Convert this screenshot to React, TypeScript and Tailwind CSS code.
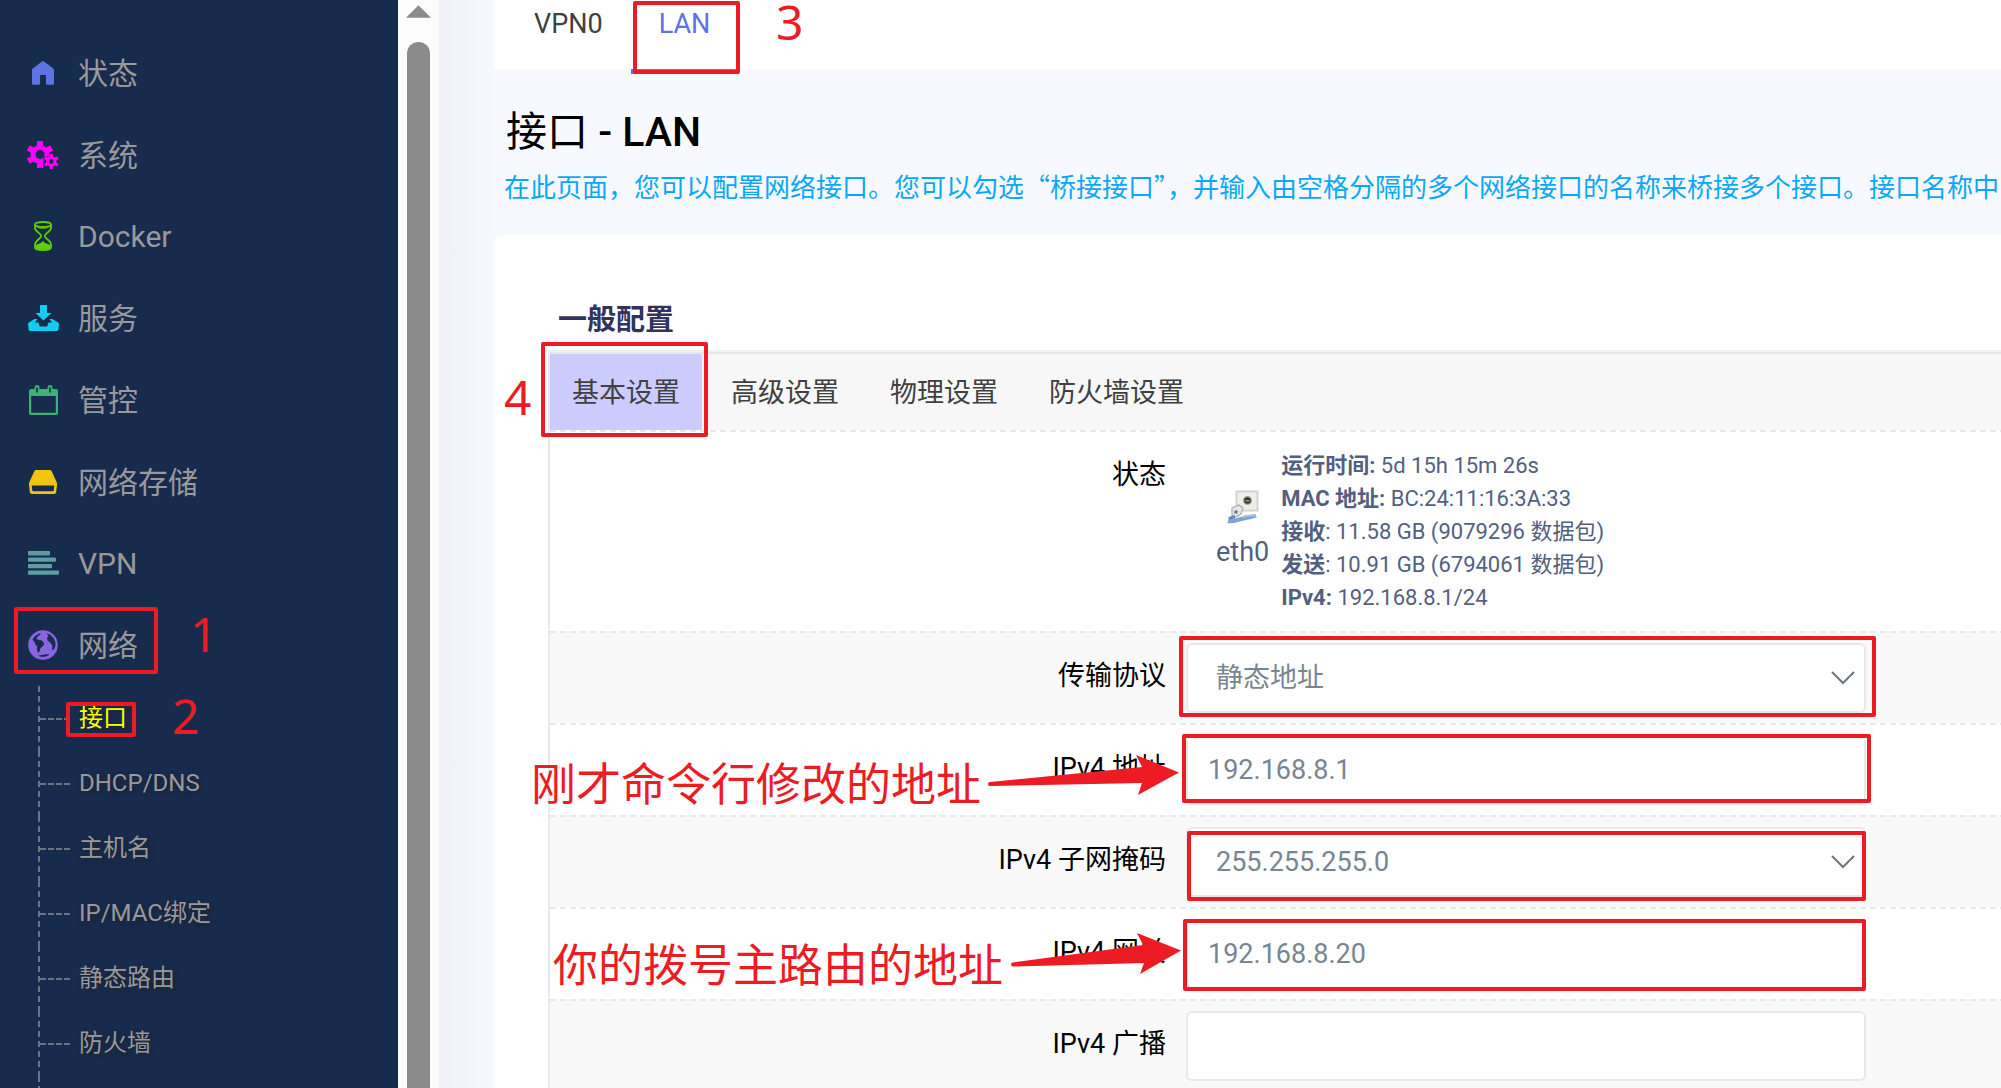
import type { ReactNode } from "react";

const DASH_X_LIGHT =
  "bg-[repeating-linear-gradient(90deg,#e4e9ea_0px,#e4e9ea_6px,transparent_6px,transparent_10px)]";
const DASH_X_NAV =
  "bg-[repeating-linear-gradient(90deg,#6b7480_0px,#6b7480_6px,transparent_6px,transparent_8px)]";
const DASH_Y_NAV =
  "bg-[repeating-linear-gradient(180deg,#6b7480_0px,#6b7480_6px,transparent_6px,transparent_10px)]";

function HomeIcon() {
  return (
    <svg width="22" height="24" viewBox="0 0 22 24" fill="#5e72e4" aria-hidden="true">
      <path d="M10 .6a1.6 1.6 0 0 1 2 0L21 7.2a2 2 0 0 1 1 1.7V22.5a1.3 1.3 0 0 1-1.3 1.3H15a1 1 0 0 1-1-1V14H8v8.8a1 1 0 0 1-1 1H1.300A1.300 1.300 0 0 1 0 22.500V8.900A2 2 0 0 1 1 7.200Z" />
    </svg>
  );
}

function Gear({ cx, cy, r, sw, reach, tooth }: { cx: number; cy: number; r: number; sw: number; reach: number; tooth: number }) {
  return (
    <g stroke="#f0f" fill="none" transform={`translate(${cx} ${cy})`}>
      <circle r={r} strokeWidth={sw} />
      {[0, 60, 120, 180, 240, 300].map((a) => (
        <line key={a} x1="0" y1={-r} x2="0" y2={-reach} strokeWidth={tooth} transform={`rotate(${a})`} />
      ))}
    </g>
  );
}

function CogsIcon() {
  return (
    <svg width="32" height="28" viewBox="0 0 32 28" aria-hidden="true">
      <Gear cx={13} cy={13.5} r={7} sw={5} reach={13.4} tooth={6} />
      <path d="M16.500 28V15.500h15V28z" fill="#172b4d" />
      <Gear cx={24.3} cy={20.4} r={3.8} sw={3} reach={7.6} tooth={3} />
    </svg>
  );
}

function HourglassIcon() {
  return (
    <svg width="18" height="30" viewBox="0 0 18 30" fill="none" stroke="#5fcf00" strokeWidth="1.800" aria-hidden="true">
      <ellipse cx="9" cy="3.500" rx="8" ry="2.500" />
      <path d="M1 3.500v3.200C1 11 7.200 12 7.200 15S1 19 1 24v2.500C1 28 4.500 29.100 9 29.100s8-1.100 8-2.600V24c0-5-6.200-6-6.200-9S17 11 17 6.700V3.500" />
      <path d="M3.500 6.500c3 1 8 1 11 0" strokeWidth="1" />
      <path d="M9 19.500c.6 3 6.500 3.500 7 4.500v3.500c-3 1.800-11 1.800-14 0V24c.5-1 6.400-1.500 7-4.500z" fill="#5fcf00" stroke="none" />
    </svg>
  );
}

function DownloadIcon() {
  return (
    <svg width="31" height="26" viewBox="0 0 31 26" fill="#11cdef" aria-hidden="true">
      <path d="M12 0h7v8h4.500L15.500 15.500 7.500 8H12z" />
      <path d="M6.500 14 9.500 14 7 17.500h3.500L11.800 21.500h7.400l1.300-4H24L21.500 14h3l5.600 3.500c.6.5.9 1 .9 1.800L30.400 24.600a1.500 1.500 0 0 1-1.500 1.400H2.100A1.500 1.500 0 0 1 .6 24.600L0 19.300c0-.8.3-1.300.9-1.800z" />
    </svg>
  );
}

function CalendarIcon() {
  return (
    <svg width="29" height="30" viewBox="0 0 29 30" aria-hidden="true">
      <path
        fillRule="evenodd"
        fill="#3cb371"
        d="M2 4h3.500V2.500a2.500 2.500 0 0 1 5 0V4h8V2.500a2.500 2.500 0 0 1 5 0V4H27a2 2 0 0 1 2 2v22a2 2 0 0 1-2 2H2a2 2 0 0 1-2-2V6a2 2 0 0 1 2-2zM2.200 11v16.800h24.600V11zM7.200 2.500v5h1.600v-5zM20.200 2.500v5h1.600v-5z"
      />
    </svg>
  );
}

function DriveIcon() {
  return (
    <svg width="28" height="24" viewBox="0 0 28 24" aria-hidden="true">
      <path
        fillRule="evenodd"
        fill="#f1c40f"
        d="M7.500 0h13c1 0 1.800.4 2.200 1.300L27.600 12c.4 1 .5 2 .4 3l-.8 7c-.2 1.300-1 2-2.200 2H3c-1.200 0-2-.7-2.200-2L0 15c-.1-1 0-2 .4-3L5.300 1.300C5.700.4 6.500 0 7.500 0zM3.500 15.500c-.5 0-.8.3-.7.8l.5 4.200c.1.500.4.800 1 .800h19.400c.6 0 .9-.3 1-.8l.5-4.200c.1-.5-.2-.8-.7-.8z"
      />
    </svg>
  );
}

function LinesIcon() {
  return (
    <svg width="31" height="24" viewBox="0 0 31 24" fill="#5f9ea0" aria-hidden="true">
      <rect y="0" width="22" height="4.400" rx="1" />
      <rect y="6.400" width="28" height="4.400" rx="1" />
      <rect y="12.900" width="24" height="4.400" rx="1" />
      <rect y="19.400" width="31" height="4.400" rx="1" />
    </svg>
  );
}

function GlobeIcon() {
  return (
    <svg width="30" height="30" viewBox="0 0 30 30" aria-hidden="true">
      <circle cx="15" cy="15" r="14.800" fill="#8965e0" />
      <g fill="#172b4d">
        <path d="M4.500 9.500 7 6l3.500-2.300 2.500-.4-1 1.500-2.500 1.700-1 2.500 2.500 1 3 .5 1 1.500 1.200 1.200-.7 2.300-1.800 1.500-1.200 1.200-.7 2.500L10.500 23 9 20.500l.3-4-1.800-2-1-2.500z" />
        <path d="M18.500 3.500 22 4.500l3.500 3.500 1.800 4 .2 4-1.500 3-1.200 1.500-.8-2 .4-3-2.400-3-2.500-2-.5-2.500 1.500-2z" />
        <path d="M10.500 25.500 14 25l3.500-.8 4 .3-2 1.500-4.500 1-3.500-.5z" />
      </g>
    </svg>
  );
}

function EthernetIcon() {
  return (
    <svg width="32" height="34" viewBox="0 0 32 34" aria-hidden="true">
      <rect x="9.500" y="1.500" width="21" height="19" fill="#eeeeec" stroke="#d3d3d0" strokeWidth="2" />
      <circle cx="20.500" cy="10.500" r="4.500" fill="#a2a49c" />
      <circle cx="20.500" cy="10.500" r="3.200" fill="#34352a" />
      <path d="M18 10h5l-1 1.800h-3z" fill="#a8962c" />
      <path d="M5 18l7-3 4 3-2 6-5 3-4-2z" fill="#e6e6e3" stroke="#a9abaa" strokeWidth="1.200" />
      <path d="M8 20l3 1-1 3-3-1z" fill="#5a80ad" />
      <path d="M1 31c3 1 6 0 11-1.500 6-2 10-1 17-4" fill="none" stroke="#7ea4d4" strokeWidth="4" />
      <path d="M2 29c2-2 3-2 6-2" fill="none" stroke="#5c88c0" strokeWidth="3" />
      <path d="M15 27c5-1.500 9-1.500 14-2" fill="none" stroke="#a9c2e2" strokeWidth="2" />
    </svg>
  );
}

const NAV: { label: string; icon: ReactNode }[] = [
  { label: "状态", icon: <HomeIcon /> },
  { label: "系统", icon: <CogsIcon /> },
  { label: "Docker", icon: <HourglassIcon /> },
  { label: "服务", icon: <DownloadIcon /> },
  { label: "管控", icon: <CalendarIcon /> },
  { label: "网络存储", icon: <DriveIcon /> },
  { label: "VPN", icon: <LinesIcon /> },
  { label: "网络", icon: <GlobeIcon /> },
];

const SUBNAV = ["接口", "DHCP/DNS", "主机名", "IP/MAC绑定", "静态路由", "防火墙"];

function Sidebar() {
  return (
    <nav className="flex h-full w-[398px] shrink-0 flex-col overflow-hidden bg-[#172b4d] pt-8 text-[#999999]">
      <ul className="flex h-[654px] shrink-0 flex-col">
        {NAV.map((item) => (
          <li key={item.label} className="flex-1">
            <a href="#" className="flex h-full items-center text-[30px] leading-10">
              <span className="ml-[27px] flex w-8 justify-center">{item.icon}</span>
              <span className="ml-[19px] pt-[2px]">{item.label}</span>
            </a>
          </li>
        ))}
      </ul>
      <ul className="ml-[38px] shrink-0">
        {SUBNAV.map((label, i) => (
          <li key={label} className="flex h-[65px] items-center">
            <span className={`h-full w-[2px] ${DASH_Y_NAV}`} />
            <span className={`h-[2px] w-[30px] ${DASH_X_NAV}`} />
            <a
              href="#"
              className={
                i === 0
                  ? "ml-[9px] pb-[2px] text-2xl text-[#ffff00] text-shadow-[2px_2px_4px_rgb(34_34_34/0.8)]"
                  : "ml-[9px] pb-[2px] text-2xl text-shadow-[2px_2px_4px_rgb(34_34_34/0.8)]"
              }
            >
              {label}
            </a>
          </li>
        ))}
      </ul>
      <div className={`ml-[38px] w-[2px] flex-1 ${DASH_Y_NAV}`} />
    </nav>
  );
}

function ScrollTrack() {
  return (
    <div className="flex h-full w-[41px] shrink-0 flex-col items-center bg-[#fcfcfc] pt-[5px]">
      <svg width="25" height="13" viewBox="0 0 26 13" fill="#8b8b8b" aria-hidden="true">
        <path d="M13 0l13 13H0z" />
      </svg>
      <div className="mt-6 w-[23px] flex-1 rounded-t-full bg-[#8b8b8b]" />
    </div>
  );
}

function Row({ label, htmlFor, shaded, children }: { label: string; htmlFor?: string; shaded?: boolean; children: ReactNode }) {
  const labelClass = "w-[616px] shrink-0 pt-[23px] text-right text-[27px] leading-10 text-black";
  return (
    <div className={shaded ? "bg-[#f9f9f9]" : "bg-white"}>
      <div className={`h-[2px] ${DASH_X_LIGHT}`} />
      <div className="flex">
        {htmlFor ? (
          <label htmlFor={htmlFor} className={labelClass}>
            {label}
          </label>
        ) : (
          <div className={labelClass}>{label}</div>
        )}
        {children}
      </div>
    </div>
  );
}

function TextField({ id, value }: { id: string; value: string }) {
  return (
    <input
      id={id}
      type="text"
      defaultValue={value}
      className="mb-[10px] ml-5 mt-[10px] h-[70px] w-[680px] rounded-md border-2 border-[#e4e9ec] bg-white px-5 text-[27px] text-[#78858f]"
    />
  );
}

function SelectField({ id, value }: { id: string; value: string }) {
  return (
    <div className="relative mb-[10px] ml-5 mt-[10px] h-[70px] w-[680px]">
      <select
        id={id}
        defaultValue={value}
        className="size-full appearance-none rounded-md border-2 border-[#e4e9ec] bg-white px-7 text-[27px] text-[#78858f]"
      >
        <option>{value}</option>
      </select>
      <svg
        className="pointer-events-none absolute right-[11px] top-7"
        width="24"
        height="14"
        viewBox="0 0 24 14"
        fill="none"
        stroke="#6b7782"
        strokeWidth="2"
        aria-hidden="true"
      >
        <path d="M1 1l11 11L23 1" />
      </svg>
    </div>
  );
}

function InterfaceStatus() {
  return (
    <div className="ml-[50px] flex py-[17px] text-[#525f7f]">
      <div className="flex flex-col items-center pt-[41px]">
        <EthernetIcon />
        <span className="mt-2 text-[27px] leading-10">eth0</span>
      </div>
      <div className="ml-3 text-[22px] leading-[33px]">
        <div><strong>运行时间:</strong> 5d 15h 15m 26s</div>
        <div><strong>MAC 地址:</strong> BC:24:11:16:3A:33</div>
        <div><strong>接收</strong>: 11.58 GB (9079296 数据包)</div>
        <div><strong>发送</strong>: 10.91 GB (6794061 数据包)</div>
        <div><strong>IPv4:</strong> 192.168.8.1/24</div>
      </div>
    </div>
  );
}

function Main() {
  return (
    <main className="h-full min-w-0 flex-1 overflow-hidden bg-[#f8f9fe] bg-linear-to-r from-[#eff1f7] to-[#f8f9fe] to-[60px] pl-[55px]">
      <div className="flex h-[69px] bg-white pl-3 text-[27px] leading-10">
        <a href="#" className="h-[74px] px-7 pt-1">
          <span className="text-[#404040]">VPN0</span>
        </a>
        <a href="#" className="h-[74px] border-b-[5px] border-[#5e72e4] px-7 pt-1 text-[#5e72e4]">LAN</a>
      </div>
      <h2 className="ml-3 mt-[33px] text-[41px] font-medium leading-[60px] text-black">
        <span className="font-normal">接口</span> - LAN
      </h2>
      <p className="ml-[10px] mt-1 whitespace-nowrap font-['Noto_Sans_CJK_SC',sans-serif] text-[26px] leading-10 text-[#09a8fa]">
        在此页面，您可以配置网络接口。您可以勾选“桥接接口”，并输入由空格分隔的多个网络接口的名称来桥接多个接口。接口名称中
      </p>
      <section className="mt-[29px] rounded-tl-lg bg-white pl-[54px] pt-[65px]">
        <h3 className="ml-[10px] text-[29px] font-bold leading-10 text-[#32325d]">一般配置</h3>
        <div className="mt-[10px] border-t-2 border-[#f0f2f2]">
          <div className="border-l-2 border-t-2 border-[#e4e9ec]">
            <div className="flex gap-[7px] bg-[#f7f7f7] text-[27px] leading-10 text-[#404040]">
              <button type="button" className="h-[76px] bg-[#ccccff] px-[22px] pt-[2px]">基本设置</button>
              <button type="button" className="h-[76px] px-[22px] pt-[2px]">高级设置</button>
              <button type="button" className="h-[76px] px-[22px] pt-[2px]">物理设置</button>
              <button type="button" className="h-[76px] px-[22px] pt-[2px]">防火墙设置</button>
            </div>
            <Row label="状态">
              <InterfaceStatus />
            </Row>
            <Row label="传输协议" htmlFor="proto" shaded>
              <SelectField id="proto" value="静态地址" />
            </Row>
            <Row label="IPv4 地址" htmlFor="ipaddr">
              <TextField id="ipaddr" value="192.168.8.1" />
            </Row>
            <Row label="IPv4 子网掩码" htmlFor="netmask" shaded>
              <SelectField id="netmask" value="255.255.255.0" />
            </Row>
            <Row label="IPv4 网关" htmlFor="gateway">
              <TextField id="gateway" value="192.168.8.20" />
            </Row>
            <Row label="IPv4 广播" htmlFor="broadcast" shaded>
              <TextField id="broadcast" value="" />
            </Row>
          </div>
        </div>
      </section>
    </main>
  );
}

function Annotations() {
  const box = "absolute rounded-xs border-4 border-[#ed1c24]";
  const digit = "absolute font-['Noto_Sans',sans-serif] text-5xl leading-none";
  const note = "absolute whitespace-nowrap text-[45px] leading-none";
  return (
    <div className="pointer-events-none absolute inset-0 text-[#ed1c24]">
      <div className={`${box} left-[14px] top-[607px] h-[67px] w-[144px]`} />
      <div className={`${box} left-[66px] top-[702px] h-[35px] w-[70px]`} />
      <div className={`${box} left-[633px] top-[1px] h-[73px] w-[107px]`} />
      <div className={`${box} left-[541px] top-[342px] h-[95px] w-[167px]`} />
      <div className={`${box} left-[1179px] top-[636px] h-[81px] w-[697px]`} />
      <div className={`${box} left-[1182px] top-[734px] h-[69px] w-[689px]`} />
      <div className={`${box} left-[1187px] top-[831px] h-[70px] w-[679px]`} />
      <div className={`${box} left-[1183px] top-[919px] h-[72px] w-[683px]`} />
      <span className={`${digit} left-[190px] top-[610px]`}>1</span>
      <span className={`${digit} left-[172px] top-[692px]`}>2</span>
      <span className={`${digit} left-[776px] top-[-2px]`}>3</span>
      <span className={`${digit} left-[504px] top-[373px]`}>4</span>
      <span className={`${note} left-[531px] top-[763px]`}>刚才命令行修改的地址</span>
      <span className={`${note} left-[553px] top-[944px]`}>你的拨号主路由的地址</span>
      <svg className="absolute left-[988px] top-[755px]" width="192" height="40" viewBox="0 0 192 40" fill="#ed1c24" aria-hidden="true">
        <path d="M2 27L154 12 148 0 191 17.500 150 40 154 28 2 31a2 2 0 0 1 0-4z" />
      </svg>
      <svg className="absolute left-[1011px] top-[933px]" width="170" height="41" viewBox="0 0 170 41" fill="#ed1c24" aria-hidden="true">
        <path d="M2 29.500L132 12 126 0 170 17.500 129 41 133 30 2 33.500a2 2 0 0 1 0-4z" />
      </svg>
    </div>
  );
}

export default function App() {
  return (
    <div lang="zh-CN" className="relative flex h-screen overflow-hidden font-[Roboto,'Noto_Sans_CJK_SC',sans-serif]">
      <Sidebar />
      <ScrollTrack />
      <Main />
      <Annotations />
    </div>
  );
}
